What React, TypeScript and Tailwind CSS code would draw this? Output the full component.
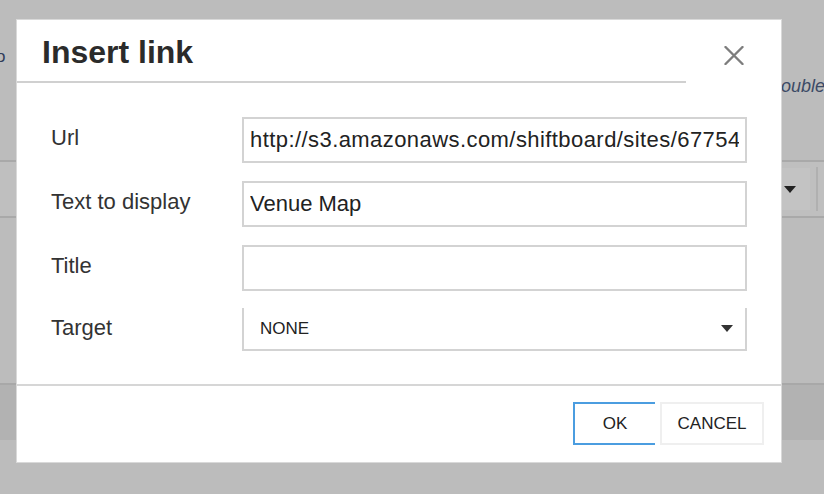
import React from "react";

const labelClass = "w-[225px] shrink-0 pl-[34px] pb-[4px] text-[22px] leading-none text-[#333]";
const inputClass =
	"w-[505px] h-[46px] border-2 border-[#d3d3d3] bg-white px-[6px] text-[22px] text-[#222] outline-none font-['Liberation_Sans',Arial,sans-serif]";

function CloseIcon() {
	return (
		<svg width="20" height="19" viewBox="0 0 20 19" fill="none">
			<path d="M1.5 1 L18.5 18 M18.5 1 L1.5 18" stroke="#7d7d7d" strokeWidth="2.4" strokeLinecap="round" />
		</svg>
	);
}

function Caret({ color = "#333" }: { color?: string }) {
	return (
		<svg width="12" height="7" viewBox="0 0 12 7">
			<path d="M0 0 H12 L6 7 Z" fill={color} />
		</svg>
	);
}

function FormRow({ label, children }: { label: string; children: React.ReactNode }) {
	return (
		<div className="flex items-center">
			<div className={labelClass}>{label}</div>
			{children}
		</div>
	);
}

function InsertLinkDialog() {
	return (
		<div className="absolute left-[16px] top-[19px] w-[766px] h-[444px] border border-[#d9d9d9] bg-white flex flex-col">
			<div className="flex h-[63px] shrink-0">
				<div className="w-[669px] h-[63px] border-b-2 border-[#d0d0d0] pl-[25px] pt-[16px]">
					<h1 className="text-[32px] leading-[32px] font-bold text-[#2b2b2b]">Insert link</h1>
				</div>
				<div className="flex-1 flex justify-center items-center pt-[8px]">
					<button className="flex items-center justify-center">
						<CloseIcon />
					</button>
				</div>
			</div>

			<div className="h-[301px] shrink-0 pt-[34px] flex flex-col gap-[18px]">
				<FormRow label="Url">
					<input
						readOnly
						value="http://s3.amazonaws.com/shiftboard/sites/67754/venue-map.pdf"
						className={inputClass + " border-[#4b9de0] tracking-[0.43px]"}
					/>
				</FormRow>
				<FormRow label="Text to display">
					<input readOnly value="Venue Map" className={inputClass} />
				</FormRow>
				<FormRow label="Title">
					<input readOnly value="" className={inputClass} />
				</FormRow>
				<div className="flex items-center -mt-[1px]">
					<div className={labelClass}>Target</div>
					<div className="w-[505px] h-[43px] border-x-2 border-b-2 border-[#d3d3d3] flex items-center justify-between pl-[16px] pr-[12px]">
						<span className="text-[17px] text-[#222]">NONE</span>
						<Caret />
					</div>
				</div>
			</div>

			<div className="border-t-2 border-[#d6d6d6] flex justify-end pt-[16px] pr-[17px]">
				<button className="w-[82px] h-[43px] border-2 border-r-0 border-[#4b9de0] text-[17px] text-[#222] flex items-center justify-center">
					OK
				</button>
				<button className="ml-[5px] w-[104px] h-[43px] border-2 border-[#efefef] text-[17px] text-[#222] flex items-center justify-center">
					CANCEL
				</button>
			</div>
		</div>
	);
}

export default function App() {
	return (
		<div className="relative w-[824px] h-[494px] overflow-hidden bg-[#bcbcbc] font-['Liberation_Sans',Arial,sans-serif]">
			{/* page behind the modal */}
			<div className="flex flex-col">
				<div className="h-[160px] relative">
					<span className="absolute left-[-4px] top-[44px] text-[17px] text-[#2f3d5a]">o</span>
					<span className="absolute left-[768px] top-[73px] text-[18px] italic text-[#3b4a66] whitespace-nowrap">Double click</span>
				</div>
				<div className="h-[58px] border-y-2 border-[#a9a9a9] bg-[#bfbfbf] flex items-center justify-end pr-[6px]">
					<div className="w-[30px] h-[42px] bg-[#c3c3c3] flex items-center pl-[4px]">
						<Caret color="#222" />
					</div>
					<div className="ml-[6px] w-[2px] h-[44px] bg-[#b0b0b0]" />
				</div>
				<div className="h-[165px]" />
				<div className="h-[57px] bg-[#b2b2b2] border-t-2 border-[#a8a8a8]" />
			</div>

			<InsertLinkDialog />
		</div>
	);
}
